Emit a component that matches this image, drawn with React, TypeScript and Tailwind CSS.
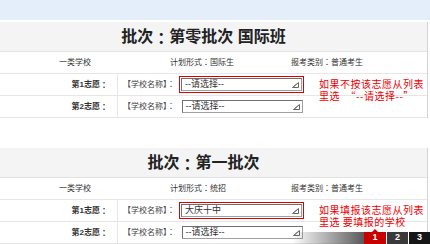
const font = "font-['Liberation_Sans','Noto_Sans_CJK_SC',sans-serif]";

// fullwidth colon, centred as in the old Song-style fonts
const C = () => <span className="font-['Noto_Sans_CJK_TC',sans-serif]">：</span>;

// little grip arrow at the right end of the select
const Arrow = () => (
    <svg width="7" height="6" viewBox="0 0 7 6" className="shrink-0">
        <path d="M0.5 5.5 L6.5 5.5 L6.5 0.5 Z" fill="none" stroke="#666" strokeWidth="1"/>
        <path d="M2 4.5 L5.5 1.5" stroke="#666" strokeWidth="0.8"/>
    </svg>
);

type SelectProps = {
    value: string;
    highlight?: boolean;
};

const Select = ({value, highlight}: SelectProps) => (
    <div className={highlight ? "border-[1.5px] border-[#e00000] p-[1px]" : "p-[2.5px]"}>
        <div
            className="flex h-[13px] w-[121px] items-center justify-between border border-[#a0a0a0] border-l-[#707070] border-t-[#707070] bg-white pl-[3px] pr-[2px] text-[9px] leading-none text-[#333]">
            <span>{value}</span>
            <Arrow/>
        </div>
    </div>
);

type PanelProps = {
    title: string;
    plan: string;
    first: string;
    note: [string, string];
};

const Panel = ({title, plan, first, note}: PanelProps) => (
    <div className="w-[428px] border-r border-[#d4d4d4] bg-white">
        <div
            className="flex h-[30px] items-center justify-center border-b border-[#e2e2e2] bg-[#f4f4f4] pr-[20px] text-[16px] font-bold text-[#222]">
            批次<C/>{title}
        </div>
        <div className="flex h-[22px] items-center border-b border-[#e6e6e6] pl-[59px] text-[8px] text-[#333]">
            <span className="w-[111px]">一类学校</span>
            <span className="w-[121px]">计划形式<C/>{plan}</span>
            <span>报考类别<C/>普通考生</span>
        </div>
        <div className="relative flex h-[22px] border-b border-[#e6e6e6]">
            <div
                className="flex w-[118px] items-center justify-end border-r border-[#e6e6e6] pr-[9px] text-[8px] font-semibold text-[#333]">
                第1志愿<C/>
            </div>
            <div className="flex items-center pl-[5px] text-[8px] text-[#444]">
                <span className="w-[56px]">【学校名称】<C/></span>
                <Select value={first} highlight/>
            </div>
            <div
                className="absolute left-[319px] top-[4px] font-['Noto_Sans_CJK_SC',sans-serif] text-[10px] leading-[12px] text-[#ee0000] tracking-[0.5px]">
                <div>{note[0]}</div>
                <div className="whitespace-pre">{note[1]}</div>
            </div>
        </div>
        <div className="flex h-[22px] border-b border-[#e6e6e6]">
            <div
                className="flex w-[118px] items-center justify-end border-r border-[#e6e6e6] pr-[9px] text-[8px] font-semibold text-[#333]">
                第2志愿<C/>
            </div>
            <div className="flex items-center pl-[5px] text-[8px] text-[#444]">
                <span className="w-[56px]">【学校名称】<C/></span>
                <Select value="--请选择--"/>
            </div>
        </div>
    </div>
);

export default function App() {
    return (
        <div className={`relative h-[244px] w-[430px] overflow-hidden bg-white ${font}`}>
            <div className="h-[20px] bg-[#e3eefa]"/>
            <div className="h-[2px]"/>
            <Panel
                title="第零批次 国际班"
                plan="国际生"
                first="--请选择--"
                note={["如果不按该志愿从列表", "里选  “--请选择--”"]}
            />
            <div className="h-[30px]"/>
            <Panel
                title="第一批次"
                plan="统招"
                first="大庆十中"
                note={["如果填报该志愿从列表", "里选 要填报的学校"]}
            />

            {/* slide pager, sits over the last row */}
            <div className="absolute bottom-0 right-0 flex h-[12px] items-stretch">
                <div className="w-[72px] bg-gradient-to-r from-white/0 to-[#5a5a5a]"/>
                <div
                    className="relative flex w-[22px] items-center justify-center bg-[#c80000] text-[9px] font-bold text-white">
                    <span
                        className="absolute -top-[3px] left-1/2 h-0 w-0 -translate-x-1/2 border-x-[3px] border-b-[3px] border-x-transparent border-b-[#c80000]"/>
                    1
                </div>
                <div className="w-px bg-white/40"/>
                <div
                    className="flex w-[21px] items-center justify-center bg-[#3a3a3a] text-[9px] font-bold text-white">2
                </div>
                <div className="w-px bg-white/20"/>
                <div
                    className="flex w-[21px] items-center justify-center bg-[#161616] text-[9px] font-bold text-white">3
                </div>
            </div>
        </div>
    );
}
